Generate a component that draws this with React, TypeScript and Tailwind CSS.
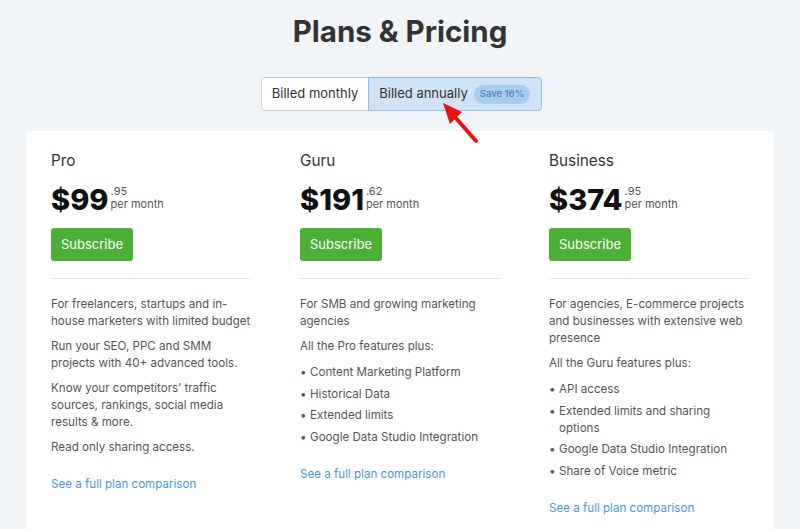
import React from "react";

type Plan = {
  name: string;
  dollars: string;
  cents: string;
  intro: string[];
  bullets?: string[];
};

const plans: Plan[] = [
  {
    name: "Pro",
    dollars: "$99",
    cents: ".95",
    intro: [
      "For freelancers, startups and in-house marketers with limited budget",
      "Run your SEO, PPC and SMM projects with 40+ advanced tools.",
      "Know your competitors’ traffic sources, rankings, social media results & more.",
      "Read only sharing access.",
    ],
  },
  {
    name: "Guru",
    dollars: "$191",
    cents: ".62",
    intro: ["For SMB and growing marketing agencies", "All the Pro features plus:"],
    bullets: [
      "Content Marketing Platform",
      "Historical Data",
      "Extended limits",
      "Google Data Studio Integration",
    ],
  },
  {
    name: "Business",
    dollars: "$374",
    cents: ".95",
    intro: [
      "For agencies, E-commerce projects and businesses with extensive web presence",
      "All the Guru features plus:",
    ],
    bullets: [
      "API access",
      "Extended limits and sharing options",
      "Google Data Studio Integration",
      "Share of Voice metric",
    ],
  },
];

function PlanCol({ p }: { p: Plan }) {
  return (
    <div className="flex flex-col">
      <div className="pt-[1px] text-[15.3px] leading-[20px] text-[#333]">{p.name}</div>
      <div className="mt-[13px] flex items-start gap-[2px]">
        <span className="text-[29px] leading-[32px] font-extrabold text-[#111]">
          {p.dollars}
        </span>
        <span className="mt-[1px] flex flex-col text-[11px] leading-[13px] text-[#555]">
          <span>{p.cents}</span>
          <span>per month</span>
        </span>
      </div>
      <button className="mt-[12px] h-[33px] w-[82px] rounded-[3px] bg-[#4caf36] text-[13px] text-white">
        Subscribe
      </button>
      <div className="mt-[17px] mb-[17px] h-px w-full bg-[#e6e8eb]" />
      <div className="flex flex-col gap-[8px]">
        {p.intro.map((t, i) => (
          <p key={i} className="text-[11.6px] leading-[17px] text-[#555]">
            {t}
          </p>
        ))}
      </div>
      {p.bullets && (
        <ul className="mt-[9px] flex flex-col gap-[4.7px]">
          {p.bullets.map((b, i) => (
            <li key={i} className="flex text-[11.6px] leading-[17px] text-[#555]">
              <span className="w-[10px] shrink-0 text-[#555]">•</span>
              <span>{b}</span>
            </li>
          ))}
        </ul>
      )}
      <a className="mt-[20px] text-[11.6px] leading-[17px] text-[#4a97dc]" href="#">
        See a full plan comparison
      </a>
    </div>
  );
}

export default function App() {
  return (
    <div
      className="relative min-h-[529px] w-[800px] overflow-hidden bg-[#f1f5f8]"
      style={{ fontFamily: "Inter, 'Noto Sans', sans-serif" }}
    >
      <h1 className="pt-[13px] text-center text-[29.5px] leading-[36px] font-bold text-[#333]">
        Plans &amp; Pricing
      </h1>
      <div className="mt-[28px] flex justify-center pl-[3px]">
        <div className="flex h-[34px] rounded-[4px] border border-[#c9cfd6] bg-white text-[13px] text-[#333]">
          <div className="flex items-center rounded-l-[4px] pl-[10px] pr-[10px]">Billed monthly</div>
          <div className="-my-px -mr-px flex items-center gap-[6px] rounded-r-[4px] border border-[#8ebfe9] bg-[#cfe3f4] pl-[10px] pr-[11px]">
            <span>Billed annually</span>
            <span className="flex h-[19px] items-center rounded-full bg-[#a7cdef] px-[6px] text-[9.5px] font-semibold text-[#5b88c2]">
              Save 16%
            </span>
          </div>
        </div>
      </div>
      <div className="mx-auto mt-[20px] w-[748px] rounded-[4px] bg-white pl-[25px] pt-[19px] pb-[20px]">
        <div className="grid grid-cols-[200px_200px_200px] gap-x-[49px]">
          {plans.map((p) => (
            <PlanCol key={p.name} p={p} />
          ))}
        </div>
      </div>
      <svg
        className="absolute left-0 top-0"
        width="800"
        height="529"
        viewBox="0 0 800 529"
      >
        <line x1="476" y1="141" x2="455" y2="117" stroke="#e8140f" strokeWidth="4" strokeLinecap="round" />
        <polygon points="443,103 462,112 450,124" fill="#e8140f" />
      </svg>
    </div>
  );
}
